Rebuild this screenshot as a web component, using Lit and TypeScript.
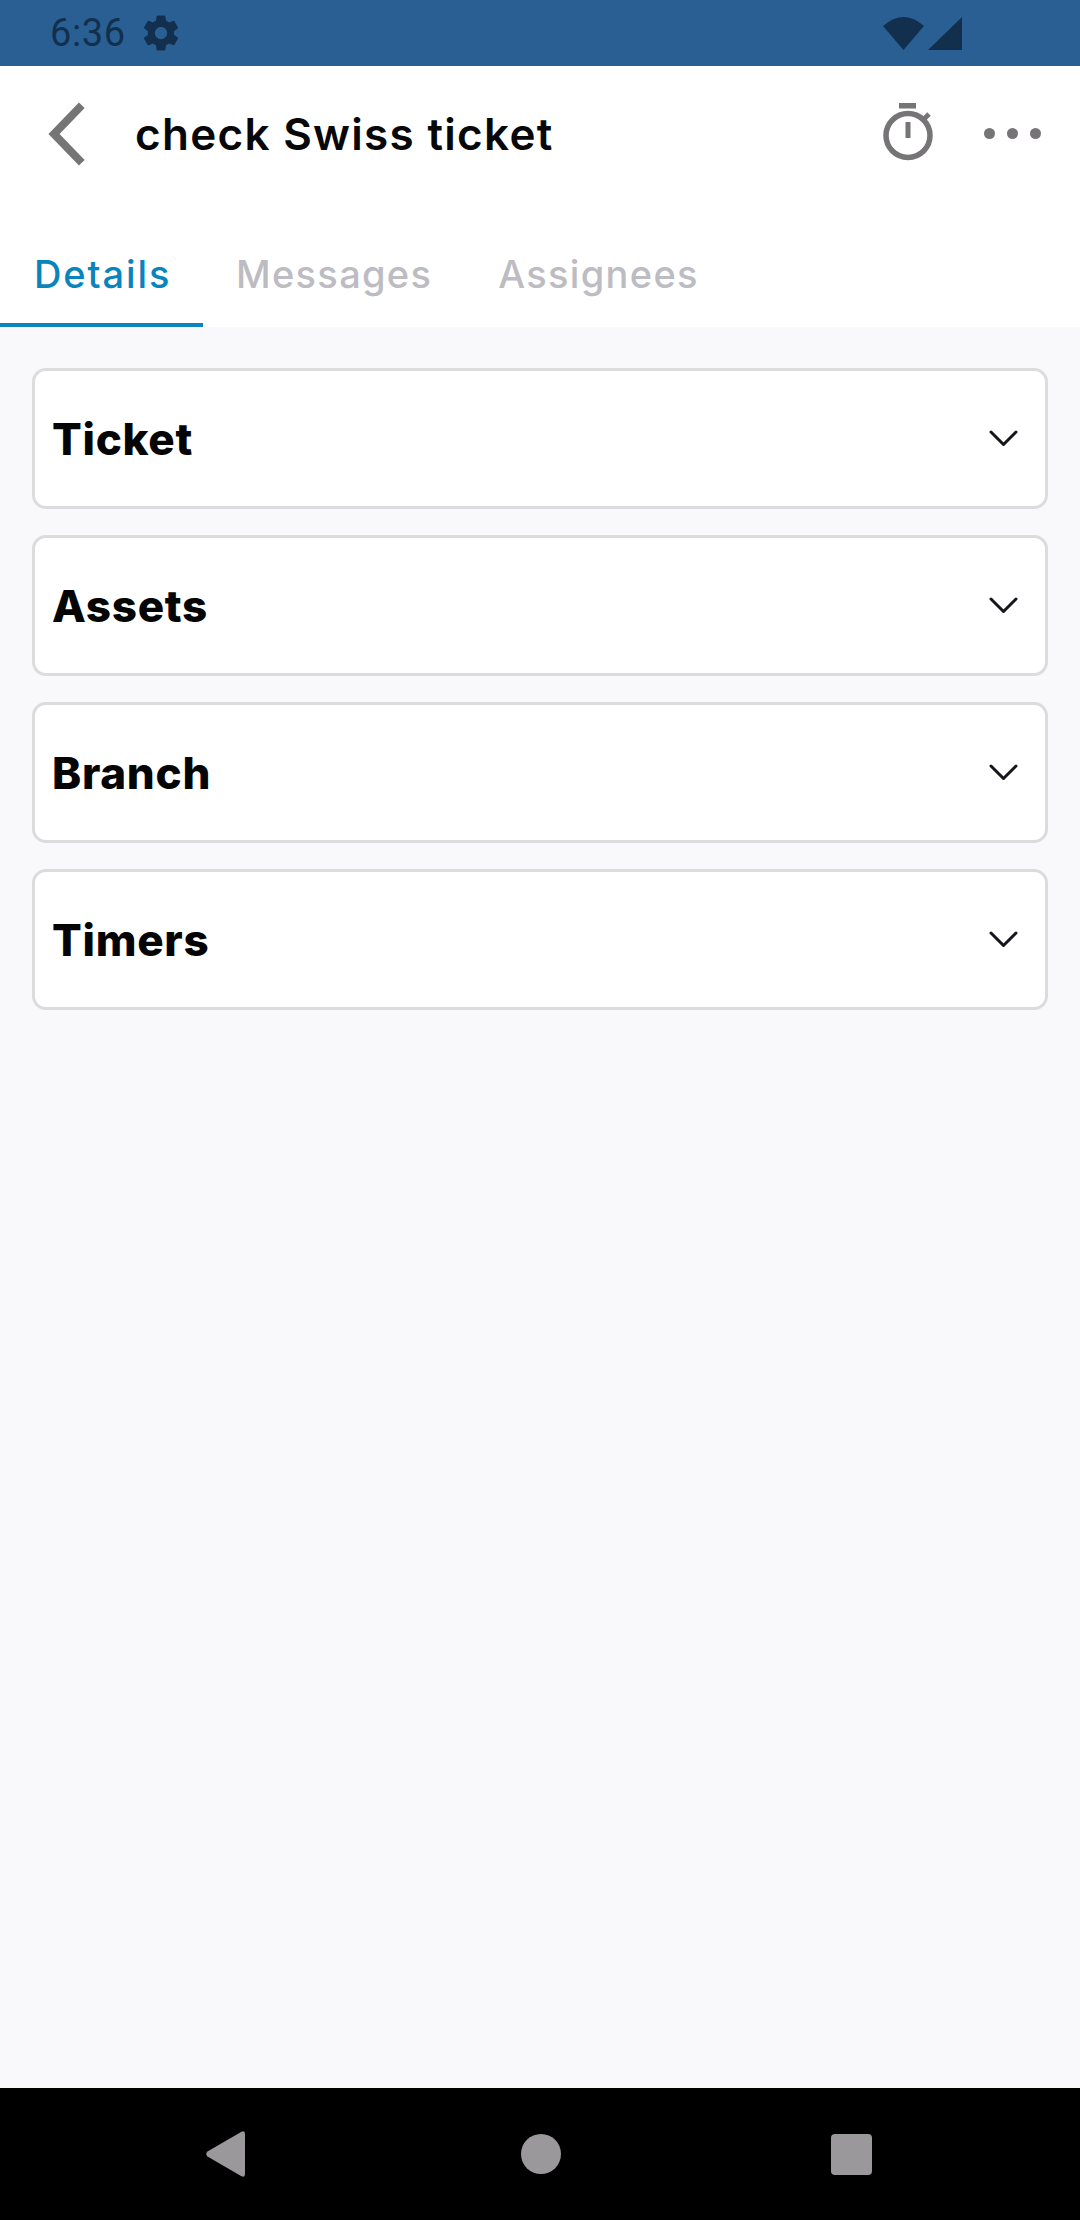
import { LitElement, html, css } from "lit";
import { customElement } from "lit/decorators.js";

const chevron = html`<svg class="chev" viewBox="0 0 29 17" width="29" height="17"><path d="M2 2 L14.500 14.500 L27 2" fill="none" stroke="#14161c" stroke-width="3" stroke-linecap="round" stroke-linejoin="round"/></svg>`;

@customElement("app-root")
export class AppRoot extends LitElement {
  static styles = css`
    :host { display: flex; flex-direction: column; width: 1080px; height: 2220px; background: #f9f8fa; font-family: Inter, "Open Sans", sans-serif; overflow: hidden; }
    .status { height: 66px; flex: none; background: #2a5f94; display: flex; align-items: center; padding: 0 0 0 50px; color: #12304e; box-sizing: border-box; }
    .time { font: 400 38px/66px Roboto, sans-serif; letter-spacing: 0.6px; width: 90px; flex: none; }
    .gear { display: block; flex: none; }
    .sig { margin-left: auto; margin-right: 118px; display: block; }
    .head { height: 134px; flex: none; background: #fff; display: flex; align-items: center; box-sizing: border-box; padding-left: 46px; }
    .back { display: block; flex: none; margin-right: 49px; }
    .title { font-size: 44px; font-weight: 600; color: #08080a; letter-spacing: 1.3px; white-space: nowrap; padding-top: 2px; }
    .acts { margin-left: auto; display: flex; align-items: center; gap: 50px; padding-right: 39px; }
    .acts svg { display: block; }
    .tabs { height: 127px; flex: none; background: #fff; display: flex; align-items: flex-end; box-sizing: border-box; }
    .tab { font-size: 38px; font-weight: 500; color: #bcbcc2; height: 81px; box-sizing: border-box; padding: 0 33px; letter-spacing: 1.3px; white-space: nowrap; line-height: 56px; }
    .tab.on { color: #0a84bd; border-bottom: 4px solid #0a84bd; width: 203px; padding-left: 34px; letter-spacing: 1.9px; }
    .list { display: flex; flex-direction: column; gap: 26px; padding: 41px 32px 0 32px; flex: 1; }
    .card { height: 141px; box-sizing: border-box; border: 3px solid #dcdbde; border-radius: 14px; background: #fff; display: flex; align-items: center; justify-content: space-between; padding: 0 27px 0 17px; }
    .card span { font-size: 44px; font-weight: 800; color: #050505; letter-spacing: 0.7px; }
    .chev { display: block; }
    .nav { height: 132px; flex: none; background: #000; display: flex; align-items: center; position: relative; }
    .nav svg { display: block; }
    .n1 { margin-left: 206px; }
    .n2 { margin-left: 275px; }
    .n3 { margin-left: 270px; }
  `;

  render() {
    return html`
      <div class="status">
        <span class="time">6:36</span>
        <svg class="gear" width="42" height="42" viewBox="0 0 24 24" fill="#12304e"><path d="M19.430 12.980c.04-.32.07-.64.07-.98s-.03-.66-.07-.98l2.110-1.650c.19-.15.24-.42.12-.64l-2-3.460c-.12-.22-.39-.3-.61-.22l-2.490 1c-.52-.4-1.080-.73-1.690-.98l-.38-2.650C14.460 2.180 14.250 2 14 2h-4c-.25 0-.46.18-.49.42l-.38 2.650c-.61.25-1.170.59-1.690.98l-2.490-1c-.23-.09-.49 0-.61.22l-2 3.460c-.13.22-.07.49.12.64l2.110 1.650c-.04.32-.07.65-.07.98s.03.66.07.98l-2.110 1.650c-.19.15-.24.42-.12.64l2 3.460c.12.22.39.3.61.22l2.490-1c.52.4 1.080.73 1.690.98l.38 2.650c.03.24.24.42.49.42h4c.25 0 .46-.18.49-.42l.38-2.650c.61-.25 1.170-.59 1.690-.98l2.490 1c.23.09.49 0 .61-.22l2-3.460c.12-.22.07-.49-.12-.64l-2.110-1.650zM12 15.500c-1.930 0-3.500-1.570-3.500-3.500s1.570-3.500 3.500-3.500 3.500 1.570 3.500 3.500-1.570 3.500-3.500 3.500z"/></svg>
        <svg class="sig" width="79" height="33" viewBox="0 0 79 33" fill="#12304e"><path d="M0 9 Q20.500 -9 41 9 L20.500 33 Z"/><path d="M45 33 L79 0 V33 Z"/></svg>
      </div>
      <div class="head">
        <svg class="back" width="40" height="68" viewBox="0 0 40 68"><path d="M35.800 6.200 L8 35 L35.800 63.800" fill="none" stroke="#757575" stroke-width="8"/></svg>
        <div class="title">check Swiss ticket</div>
        <div class="acts">
          <svg width="51" height="60" viewBox="0 0 51 60"><rect x="16" y="0" width="17" height="5.500" fill="#767476"/><circle cx="25" cy="32.500" r="22" fill="none" stroke="#767476" stroke-width="5.500"/><rect x="22.500" y="19" width="5" height="16" fill="#767476"/><path d="M41.500 15.500 L46 11" stroke="#767476" stroke-width="5" fill="none"/></svg>
          <svg width="57" height="11" viewBox="0 0 57 11" fill="#767476"><circle cx="5.500" cy="5.500" r="5.500"/><circle cx="28.500" cy="5.500" r="5.500"/><circle cx="51.500" cy="5.500" r="5.500"/></svg>
        </div>
      </div>
      <div class="tabs">
        <div class="tab on">Details</div>
        <div class="tab">Messages</div>
        <div class="tab">Assignees</div>
      </div>
      <div class="list">
        ${["Ticket", "Assets", "Branch", "Timers"].map((t) => html`<div class="card"><span>${t}</span>${chevron}</div>`)}
      </div>
      <div class="nav">
        <svg class="n1" width="40" height="46" viewBox="0 0 40 46" fill="#9a989b"><path d="M1.500 20.500 L35 1 Q39 -1 39 3 V43 Q39 47 35 45 L1.500 25.500 Q-1 23 1.500 20.500 Z"/></svg>
        <svg class="n2" width="40" height="40" viewBox="0 0 40 40" fill="#9a989b"><circle cx="20" cy="20" r="20"/></svg>
        <svg class="n3" width="41" height="41" viewBox="0 0 41 41" fill="#9a989b"><rect width="41" height="41" rx="4"/></svg>
      </div>
    `;
  }
}
